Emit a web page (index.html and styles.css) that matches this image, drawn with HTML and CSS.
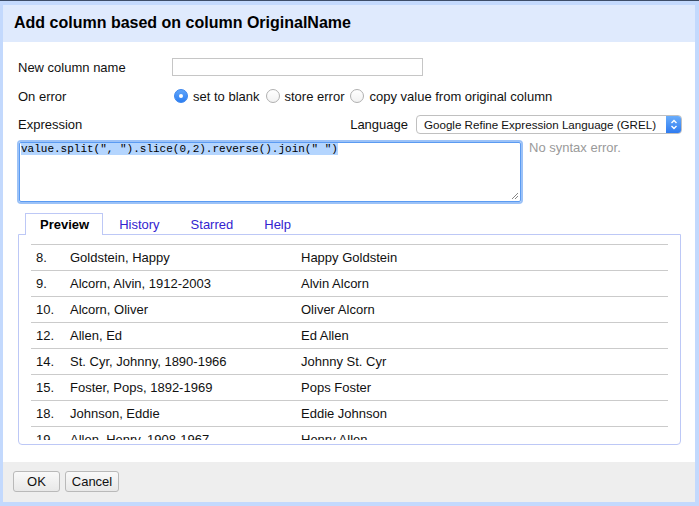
FILE: index.html
```html
<!DOCTYPE html>
<html>
<head>
<meta charset="utf-8">
<link rel="stylesheet" href="styles.css">
</head>
<body>
<div class="frame">
  <div class="dialog">
    <div class="header">Add column based on column OriginalName</div>
    <div class="body">
      <div class="row row-name">
        <span class="label">New column name</span>
        <span class="input"></span>
      </div>
      <div class="row row-error">
        <span class="label">On error</span>
        <div class="radios">
          <span class="radio checked"></span><span class="rlabel">set to blank</span>
          <span class="radio"></span><span class="rlabel">store error</span>
          <span class="radio"></span><span class="rlabel">copy value from original column</span>
        </div>
      </div>
      <div class="row row-expr">
        <span class="label">Expression</span>
        <div class="lang">
          <span class="lang-label">Language</span>
          <div class="select">
            <span class="select-text">Google Refine Expression Language (GREL)</span>
            <span class="stepper">
              <svg width="16" height="19" viewBox="0 0 16 19"><path d="M5.5 8 L8 5.5 L10.5 8" fill="none" stroke="#fff" stroke-width="1.4"/><path d="M5.5 11 L8 13.5 L10.5 11" fill="none" stroke="#fff" stroke-width="1.4"/></svg>
            </span>
          </div>
        </div>
      </div>
      <div class="row row-ta">
        <div class="textarea">
          <span class="sel">value.split(", ").slice(0,2).reverse().join(" ")</span>
          <svg class="grip" width="9" height="9" viewBox="0 0 9 9"><path d="M8 2 L2 8 M8 5 L5 8" stroke="#888" stroke-width="1"/></svg>
        </div>
        <span class="status">No syntax error.</span>
      </div>
      <div class="tabs">
        <span class="tab active">Preview</span>
        <span class="tab">History</span>
        <span class="tab">Starred</span>
        <span class="tab">Help</span>
      </div>
      <div class="panel">
        <div class="scroll">
          <div class="results">
            <div class="res"><span class="n">8.</span><span class="a">Goldstein, Happy</span><span class="b">Happy Goldstein</span></div>
            <div class="res"><span class="n">9.</span><span class="a">Alcorn, Alvin, 1912-2003</span><span class="b">Alvin Alcorn</span></div>
            <div class="res"><span class="n">10.</span><span class="a">Alcorn, Oliver</span><span class="b">Oliver Alcorn</span></div>
            <div class="res"><span class="n">12.</span><span class="a">Allen, Ed</span><span class="b">Ed Allen</span></div>
            <div class="res"><span class="n">14.</span><span class="a">St. Cyr, Johnny, 1890-1966</span><span class="b">Johnny St. Cyr</span></div>
            <div class="res"><span class="n">15.</span><span class="a">Foster, Pops, 1892-1969</span><span class="b">Pops Foster</span></div>
            <div class="res"><span class="n">18.</span><span class="a">Johnson, Eddie</span><span class="b">Eddie Johnson</span></div>
            <div class="res"><span class="n">19.</span><span class="a">Allen, Henry, 1908-1967</span><span class="b">Henry Allen</span></div>
          </div>
        </div>
      </div>
    </div>
    <div class="footer">
      <span class="btn ok">OK</span>
      <span class="btn cancel">Cancel</span>
    </div>
  </div>
</div>
</body>
</html>
```
FILE: styles.css
```css
html, body {
  margin: 0;
  padding: 0;
}
body {
  width: 699px;
  height: 506px;
  overflow: hidden;
  font-family: "Liberation Sans", Arial, sans-serif;
  font-size: 13px;
  color: #111;
  background: #c3d9fd;
}
.frame {
  width: 699px;
  height: 506px;
  box-sizing: border-box;
  border-top: 1px solid #3d4d68;
}
.dialog {
  box-sizing: border-box;
  height: 505px;
  border-style: solid;
  border-color: #c3d9fd;
  border-width: 4px 4px 4px 3px;
  display: flex;
  flex-direction: column;
  background: #fff;
}
.header {
  height: 37px;
  flex: none;
  background: #dfeafd;
  font-weight: bold;
  font-size: 16px;
  color: #000;
  padding-left: 11px;
  display: flex;
  align-items: center;
  padding-bottom: 1px;
  box-sizing: border-box;
}
.body {
  height: 420px;
  flex: none;
  box-sizing: border-box;
  padding: 16px 13px 0 15px;
  display: flex;
  flex-direction: column;
}
.row {
  display: flex;
  align-items: center;
}
.label {
  color: #111;
}
.row-name {
  height: 18px;
}
.row-name .label {
  width: 154px;
}
.input {
  width: 251px;
  height: 18px;
  box-sizing: border-box;
  border: 1px solid #c6c6c6;
  background: #fff;
}
.row-error {
  height: 18px;
  margin-top: 11px;
}
.row-error .label {
  width: 156px;
}
.radios {
  display: flex;
  align-items: center;
}
.radio {
  width: 14px;
  height: 14px;
  box-sizing: border-box;
  border-radius: 50%;
  border: 1px solid #b0b0b0;
  background: linear-gradient(#fff, #f2f2f2);
  margin-right: 5px;
  position: relative;
}
.radio.checked {
  border: 1px solid #3a85ee;
  background: linear-gradient(#5fa5fb, #2d7ff1);
}
.radio.checked::after {
  content: "";
  position: absolute;
  left: 4px;
  top: 4px;
  width: 4px;
  height: 4px;
  border-radius: 50%;
  background: #fff;
}
.rlabel {
  margin-right: 6px;
}
.rlabel:first-of-type {
  margin-right: 5px;
}
.row-expr {
  height: 19px;
  margin-top: 10px;
}
.lang {
  margin-left: auto;
  display: flex;
  align-items: center;
}
.lang-label {
  margin-right: 8px;
}
.select {
  width: 266px;
  height: 19px;
  box-sizing: border-box;
  border: 1px solid #c0c0c0;
  border-radius: 4px;
  background: #fff;
  display: flex;
  align-items: center;
  position: relative;
  overflow: hidden;
}
.select-text {
  font-size: 11.6px;
  padding-left: 7px;
  color: #111;
  flex: 1;
}
.stepper {
  width: 16px;
  height: 19px;
  margin-right: -1px;
  background: linear-gradient(#6db0fc, #2b78ef);
  display: flex;
  align-items: center;
  justify-content: center;
}
.stepper svg {
  display: block;
}
.row-ta {
  margin-top: 8px;
  align-items: flex-start;
}
.textarea {
  margin-left: 1px;
  width: 502px;
  height: 60px;
  box-sizing: border-box;
  border: 1px solid #5b9bf2;
  box-shadow: 0 0 0 2px #9cc2f7;
  border-radius: 2px;
  padding: 0 1px;
  font-family: "Liberation Mono", "Courier New", monospace;
  font-size: 11px;
  line-height: 13px;
  color: #000;
  position: relative;
}
.sel {
  background: #b4d5fe;
}
.grip {
  position: absolute;
  right: 1px;
  bottom: 1px;
}
.status {
  margin-left: 8px;
  margin-top: -2px;
  color: #9a9a9a;
}
.tabs {
  margin-top: 11px;
  margin-left: 7px;
  height: 21px;
  display: flex;
  position: relative;
  z-index: 1;
}
.tab {
  box-sizing: border-box;
  height: 22px;
  padding: 0 14px;
  margin-right: 1px;
  border: 1px solid transparent;
  border-bottom: none;
  display: flex;
  align-items: center;
  padding-bottom: 1px;
  color: #3323cf;
}
.tab.active {
  border-color: #bdc8f6;
  background: #fff;
  color: #000;
  font-weight: bold;
  padding-right: 13px;
}
.panel {
  width: 663px;
  height: 211px;
  box-sizing: border-box;
  border: 1px solid #bdc8f6;
  border-radius: 0 0 4px 4px;
  padding: 0 12px 4px 12px;
}
.scroll {
  height: 205px;
  overflow: hidden;
}
.results {
  padding-top: 9px;
}
.res {
  height: 26px;
  box-sizing: border-box;
  border-top: 1px solid #cbcbcb;
  display: flex;
  align-items: center;
  color: #111;
}
.n {
  width: 39px;
  padding-left: 5px;
  box-sizing: border-box;
  flex: none;
}
.a {
  width: 231px;
  flex: none;
}
.footer {
  height: 40px;
  flex: none;
  background: #eeeeee;
  box-sizing: border-box;
  padding: 9px 0 0 10px;
  display: flex;
  align-items: flex-start;
  gap: 5px;
}
.btn {
  height: 21px;
  box-sizing: border-box;
  border: 1px solid #b9b9b9;
  border-radius: 3px;
  background: linear-gradient(#f9f9f9, #e8e8e8);
  display: flex;
  align-items: center;
  justify-content: center;
  color: #111;
}
.ok {
  width: 47px;
}
.cancel {
  width: 54px;
}
```
